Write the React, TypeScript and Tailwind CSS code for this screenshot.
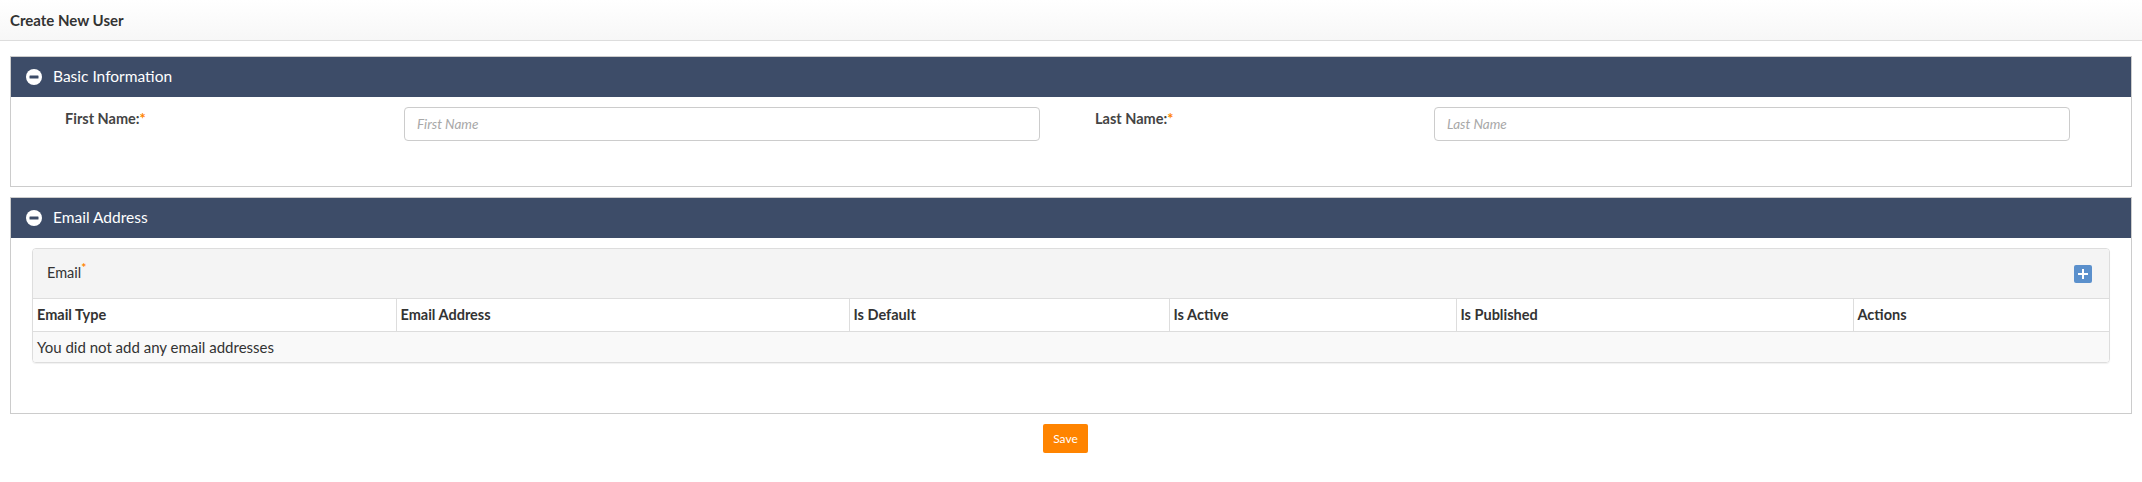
import React from 'react';

const font = { fontFamily: 'Lato, "Open Sans", sans-serif' };

function MinusCircle() {
  return (
    <svg width="16" height="16" viewBox="0 0 16 16" className="shrink-0">
      <circle cx="8" cy="8" r="8" fill="#ffffff" />
      <rect x="3.5" y="6.5" width="9" height="3" rx="0.5" fill="#3d4c68" />
    </svg>
  );
}

function PanelHeader({ title }: { title: string }) {
  return (
    <div className="h-[40px] bg-[#3d4c68] flex items-center pl-[15px] gap-[11px] text-white text-[15.5px]">
      <MinusCircle />
      <span>{title}</span>
    </div>
  );
}

function Field({ label, placeholder }: { label: string; placeholder: string }) {
  return (
    <div className="flex w-[975px]">
      <div className="w-[339px] pt-[1px] text-[14.5px] font-bold text-[#444]">
        {label}
        <span className="text-[#ff8400]">*</span>
      </div>
      <input
        placeholder={placeholder}
        className="w-[636px] h-[34px] border border-[#ccc] rounded-[4px] px-[12px] text-[13.5px] italic placeholder:text-[#a8a8a8] outline-none"
      />
    </div>
  );
}

const columns = [
  { name: 'Email Type', w: 'w-[363px]' },
  { name: 'Email Address', w: 'w-[453px]' },
  { name: 'Is Default', w: 'w-[320px]' },
  { name: 'Is Active', w: 'w-[287px]' },
  { name: 'Is Published', w: 'w-[397px]' },
  { name: 'Actions', w: '' },
];

export default function App() {
  return (
    <div className="min-h-[482px] bg-white text-[#333]" style={font}>
      {/* Page title */}
      <div className="h-[41px] border-b border-[#ddd] bg-gradient-to-b from-white to-[#f7f7f7] flex items-center px-[10px]">
        <h1 className="text-[15px] font-bold text-[#333]">Create New User</h1>
      </div>

      <div className="px-[10px] pt-[15px]">
        {/* Basic Information */}
        <div className="border border-[#ccc]">
          <PanelHeader title="Basic Information" />
          <div className="h-[89px] pl-[54px] pt-[10px] flex gap-[55px]">
            <Field label="First Name:" placeholder="First Name" />
            <Field label="Last Name:" placeholder="Last Name" />
          </div>
        </div>

        {/* Email Address */}
        <div className="border border-[#ccc] mt-[10px]">
          <PanelHeader title="Email Address" />
          <div className="px-[21px] pt-[10px] pb-[50px]">
            <div className="border border-[#ddd] rounded-[4px] shadow-[0_1px_1px_rgba(0,0,0,0.06)] overflow-hidden">
              <div className="h-[50px] bg-[#f4f4f4] border-b border-[#ddd] flex items-center justify-between pl-[14px] pr-[17px]">
                <span className="text-[14.5px] text-[#333] leading-none">
                  Email<span className="text-[#ff8400] text-[12px] font-bold relative -top-[6px]">*</span>
                </span>
                <button className="w-[18px] h-[18px] rounded-[2px] bg-[#5b90cc] flex items-center justify-center">
                  <svg width="10" height="10" viewBox="0 0 10 10">
                    <rect x="4" y="0" width="2" height="10" fill="#fff" />
                    <rect x="0" y="4" width="10" height="2" fill="#fff" />
                  </svg>
                </button>
              </div>
              <table className="w-full border-collapse">
                <thead>
                  <tr className="h-[32px] bg-white">
                    {columns.map((c, i) => (
                      <th
                        key={c.name}
                        className={`${c.w} text-left text-[14.5px] font-bold px-[4px] border-b border-[#ddd] ${i > 0 ? 'border-l' : ''}`}
                      >
                        {c.name}
                      </th>
                    ))}
                  </tr>
                </thead>
                <tbody>
                  <tr className="h-[31px] bg-[#f9f9f9]">
                    <td colSpan={6} className="px-[4px] text-[15px] text-[#333]">
                      You did not add any email addresses
                    </td>
                  </tr>
                </tbody>
              </table>
            </div>
          </div>
        </div>

        <div className="flex justify-center pt-[10px] pr-[11px]">
          <button className="w-[45px] h-[29px] bg-[#ff8400] text-white text-[12px] rounded-[2px]">Save</button>
        </div>
      </div>
    </div>
  );
}
